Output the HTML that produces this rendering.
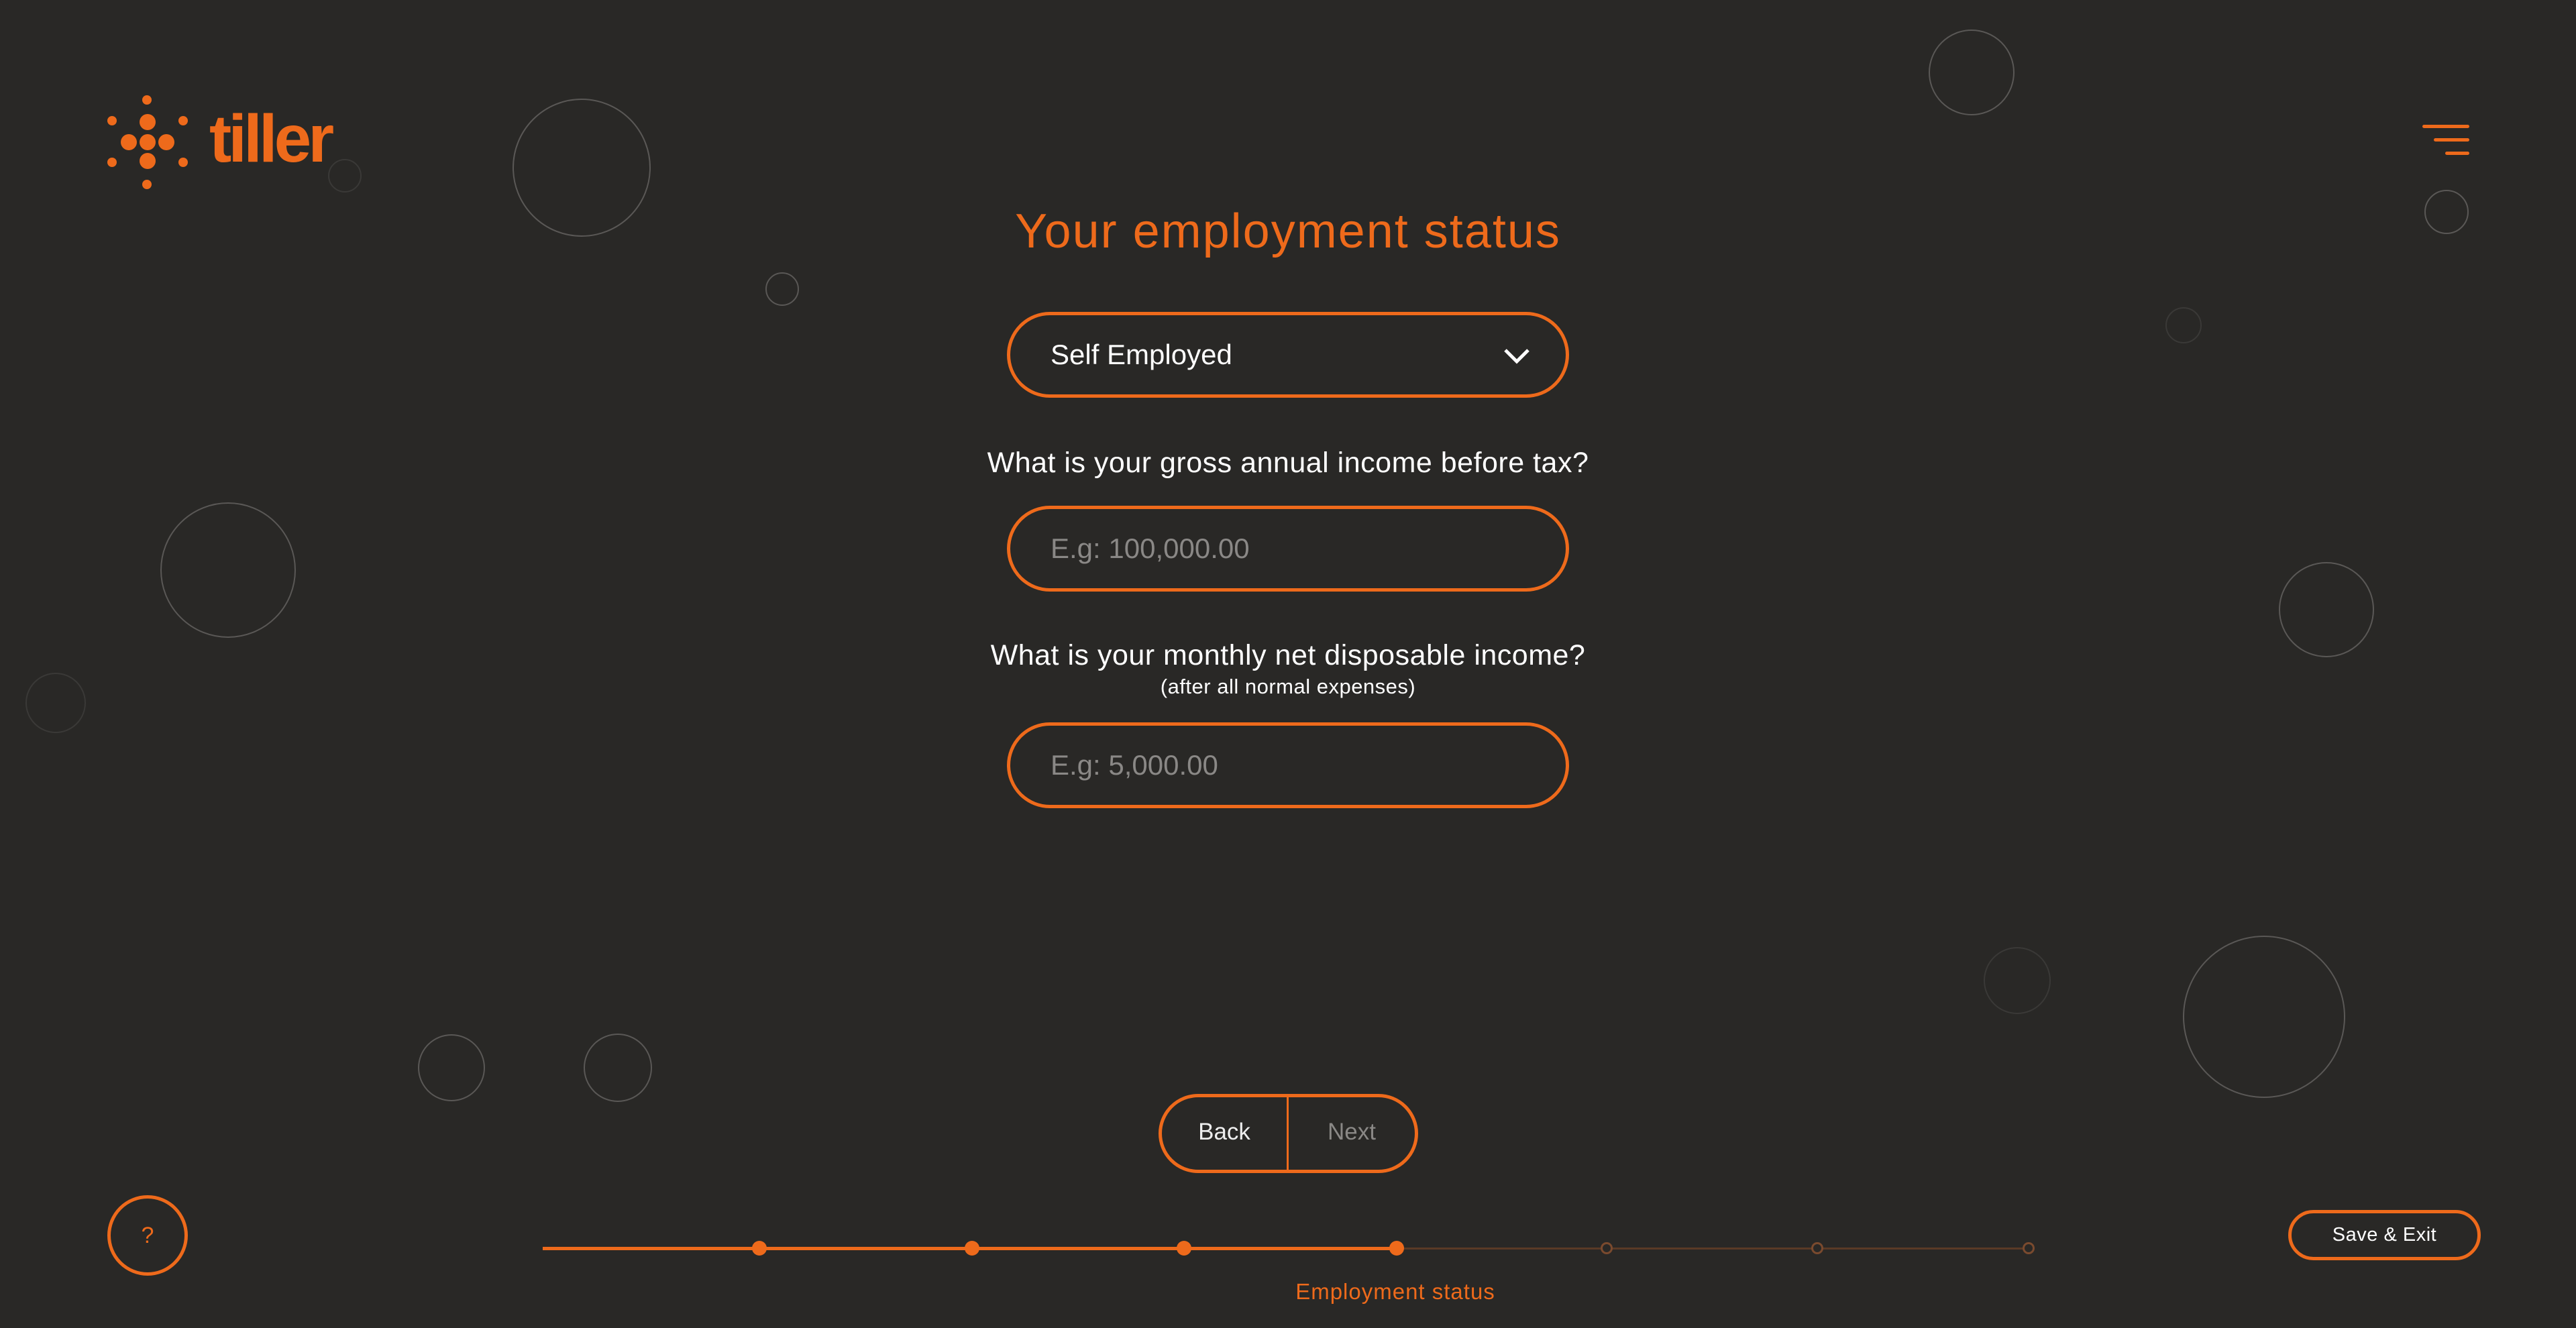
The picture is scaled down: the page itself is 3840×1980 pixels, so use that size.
<!DOCTYPE html>
<html><head><meta charset="utf-8"><style>
*{margin:0;padding:0;box-sizing:border-box}
body{width:3840px;height:1980px;background:#292826;position:relative;overflow:hidden;font-family:"Liberation Sans",sans-serif;color:#fff}
.c{position:absolute;border-radius:50%;border:2px solid #5a5856}
.d{border-color:#3a3937}
.a{position:absolute}
.field{position:absolute;left:1501px;width:838px;height:128px;border:5px solid #ee6a1b;border-radius:64px;font-size:42px;line-height:118px;padding-left:60px}
.lbl{position:absolute;left:0;width:3840px;text-align:center;font-size:43px;letter-spacing:0.5px}
.dot{position:absolute;width:22px;height:22px;border-radius:50%;background:#ee6a1b;top:1850px}
.ho{position:absolute;width:18px;height:18px;border-radius:50%;border:3px solid #7a4a2e;background:#292826;top:1852px}
</style></head><body>
<div class="c" style="left:764px;top:147px;width:206px;height:206px"></div>
<div class="c" style="left:1141px;top:406px;width:50px;height:50px"></div>
<div class="c d" style="left:489px;top:237px;width:50px;height:50px"></div>
<div class="c" style="left:2875px;top:44px;width:128px;height:128px"></div>
<div class="c" style="left:3614px;top:283px;width:66px;height:66px"></div>
<div class="c d" style="left:3228px;top:458px;width:54px;height:54px"></div>
<div class="c" style="left:239px;top:749px;width:202px;height:202px"></div>
<div class="c d" style="left:38px;top:1003px;width:90px;height:90px"></div>
<div class="c" style="left:3397px;top:838px;width:142px;height:142px"></div>
<div class="c d" style="left:2957px;top:1412px;width:100px;height:100px"></div>
<div class="c" style="left:3254px;top:1395px;width:242px;height:242px"></div>
<div class="c" style="left:623px;top:1542px;width:100px;height:100px"></div>
<div class="c" style="left:870px;top:1541px;width:102px;height:102px"></div>

<svg class="a" style="left:150px;top:135px" width="140" height="150" viewBox="0 0 140 150">
<g fill="#ee6a1b">
<circle cx="69" cy="14" r="7"/><circle cx="69" cy="140" r="7"/>
<circle cx="17" cy="45" r="7"/><circle cx="123" cy="45" r="7"/>
<circle cx="17" cy="107" r="7"/><circle cx="123" cy="107" r="7"/>
<circle cx="70" cy="47" r="12"/><circle cx="70" cy="77" r="12"/><circle cx="70" cy="105" r="12"/>
<circle cx="42" cy="77" r="12"/><circle cx="98" cy="77" r="12"/>
</g></svg>
<div class="a" style="left:312px;top:152px;font-size:100px;font-weight:bold;color:#ee6a1b;letter-spacing:-5px;line-height:110px">tiller</div>

<div class="a" style="left:3611px;top:186px;width:70px;height:5px;background:#ee6a1b;border-radius:3px"></div>
<div class="a" style="left:3628px;top:206px;width:53px;height:5px;background:#ee6a1b;border-radius:3px"></div>
<div class="a" style="left:3645px;top:226px;width:36px;height:5px;background:#ee6a1b;border-radius:3px"></div>

<div class="lbl" style="top:304px;font-size:72px;color:#ee6a1b;letter-spacing:2px">Your employment status</div>
<div class="field" style="top:465px">Self Employed
<svg class="a" style="left:735px;top:48px" width="40" height="26" viewBox="0 0 40 26"><path d="M3 4 L20 21 L37 4" fill="none" stroke="#fff" stroke-width="5"/></svg></div>
<div class="lbl" style="top:666px">What is your gross annual income before tax?</div>
<div class="field" style="top:754px;color:#8a8886">E.g: 100,000.00</div>
<div class="lbl" style="top:953px">What is your monthly net disposable income?</div>
<div class="lbl" style="top:1006px;font-size:31px">(after all normal expenses)</div>
<div class="field" style="top:1077px;color:#8a8886">E.g: 5,000.00</div>

<div class="a" style="left:1727px;top:1631px;width:387px;height:118px;border:5px solid #ee6a1b;border-radius:59px"></div>
<div class="a" style="left:1918px;top:1633px;width:3px;height:114px;background:#ee6a1b"></div>
<div class="a" style="left:1730px;top:1668px;width:190px;text-align:center;font-size:35px;color:#eee">Back</div>
<div class="a" style="left:1920px;top:1668px;width:190px;text-align:center;font-size:35px;color:#8a8886">Next</div>

<div class="a" style="left:809px;top:1859px;width:1274px;height:5px;background:#ee6a1b"></div>
<div class="a" style="left:2083px;top:1860px;width:941px;height:3px;background:#5a3a26"></div>
<div class="dot" style="left:1121px"></div><div class="dot" style="left:1438px"></div>
<div class="dot" style="left:1754px"></div><div class="dot" style="left:2071px"></div>
<div class="ho" style="left:2386px"></div><div class="ho" style="left:2700px"></div><div class="ho" style="left:3015px"></div>
<div class="a" style="left:1780px;top:1907px;width:600px;text-align:center;font-size:33px;color:#ee6a1b;letter-spacing:1px">Employment status</div>

<div class="a" style="left:160px;top:1782px;width:120px;height:120px;border:5px solid #ee6a1b;border-radius:50%;color:#ee6a1b;font-size:34px;text-align:center;line-height:110px">?</div>
<div class="a" style="left:3411px;top:1804px;width:287px;height:75px;border:5px solid #ee6a1b;border-radius:38px;font-size:29px;text-align:center;line-height:65px;letter-spacing:0.5px">Save &amp; Exit</div>
</body></html>
